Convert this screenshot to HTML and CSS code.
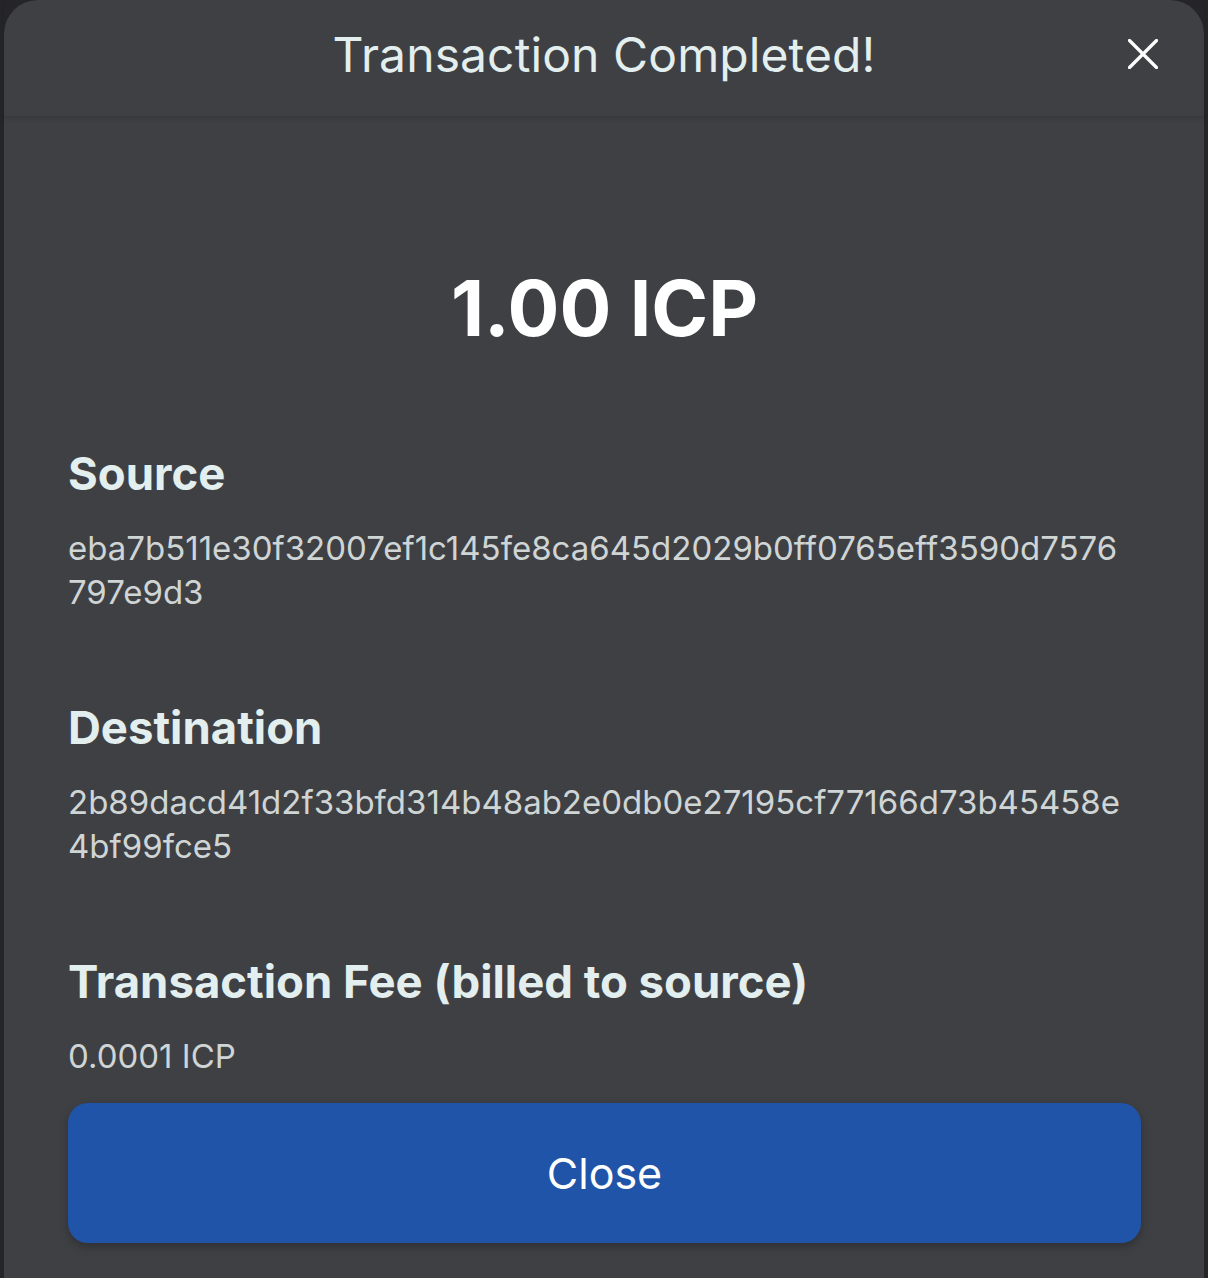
FILE: index.html
```html
<!DOCTYPE html>
<html>
<head>
    <title>Transaction Completed</title>
    <link rel="stylesheet" href="styles.css">
</head>
<body>
    <div class="modal">
        <header class="modal-header">
            <span></span>
            <h2 class="modal-title">Transaction Completed!</h2>
            <button class="close-btn" aria-label="Close">
                <svg width="30" height="30" viewBox="0 0 30 30">
                    <path d="M1.5 1.5 L28.5 28.5 M28.5 1.5 L1.5 28.5" stroke="#fff" stroke-width="3.2" stroke-linecap="round"/>
                </svg>
            </button>
        </header>

        <div class="modal-body">
            <div class="amount">1.00 ICP</div>

            <section class="field">
                <h3>Source</h3>
                <p class="hash">eba7b511e30f32007ef1c145fe8ca645d2029b0ff0765eff3590d7576<br>797e9d3</p>
            </section>

            <section class="field">
                <h3>Destination</h3>
                <p class="hash">2b89dacd41d2f33bfd314b48ab2e0db0e27195cf77166d73b45458e<br>4bf99fce5</p>
            </section>

            <section class="field fee">
                <h3>Transaction Fee (billed to source)</h3>
                <p class="hash">0.0001 ICP</p>
            </section>

            <button class="btn-primary">Close</button>
        </div>
    </div>
</body>
</html>
```

FILE: styles.css
```css
:root {
    --page: #252529;
    --modal: #3f4044;
    --heading: #e3eeee;
    --text: #cfd5d5;
    --primary: #2054a8;
}

body {
    margin: 0;
    background: var(--page);
    font-family: 'Inter', 'Noto Sans', sans-serif;
    height: 1278px;
    overflow: hidden;
}

.modal {
    margin-left: 4px;
    width: 1200px;
    min-height: 1278px;
    background: var(--modal);
    border-radius: 34px 34px 0 0;
}

.modal-header {
    display: grid;
    grid-template-columns: 1fr auto 1fr;
    align-items: center;
    height: 116px;
    padding: 0 46px;
    border-bottom: 2px solid #393a3e;
    box-shadow: 0 2px 3px rgba(0,0,0,0.08);
}

.modal-title {
    margin: 0;
    font-size: 48px;
    font-weight: 400;
    color: var(--heading);
    letter-spacing: 0.1px;
    padding-bottom: 8px;
}

.close-btn {
    justify-self: end;
    background: none;
    border: none;
    padding: 0 0 8px;
    cursor: pointer;
    display: flex;
}

.modal-body {
    padding: 0 63px 0 64px;
}

.amount {
    text-align: center;
    color: #fff;
    font-size: 77px;
    font-weight: 700;
    padding: 150px 0 98px;
    line-height: 80px;
}

.field h3 {
    margin: 0;
    font-size: 45.5px;
    font-weight: 700;
    color: var(--heading);
    line-height: 56px;
}

.field .hash {
    margin: 24px 0 86px;
    font-size: 33px;
    line-height: 44px;
    color: var(--text);
}

.field.fee .hash {
    margin-bottom: 25px;
}

.btn-primary {
    display: block;
    width: 100%;
    height: 140px;
    border: none;
    border-radius: 20px;
    background: var(--primary);
    color: #fff;
    font-family: inherit;
    font-size: 43px;
    box-shadow: 0 4px 10px rgba(0,0,0,0.25);
    cursor: pointer;
}
```
